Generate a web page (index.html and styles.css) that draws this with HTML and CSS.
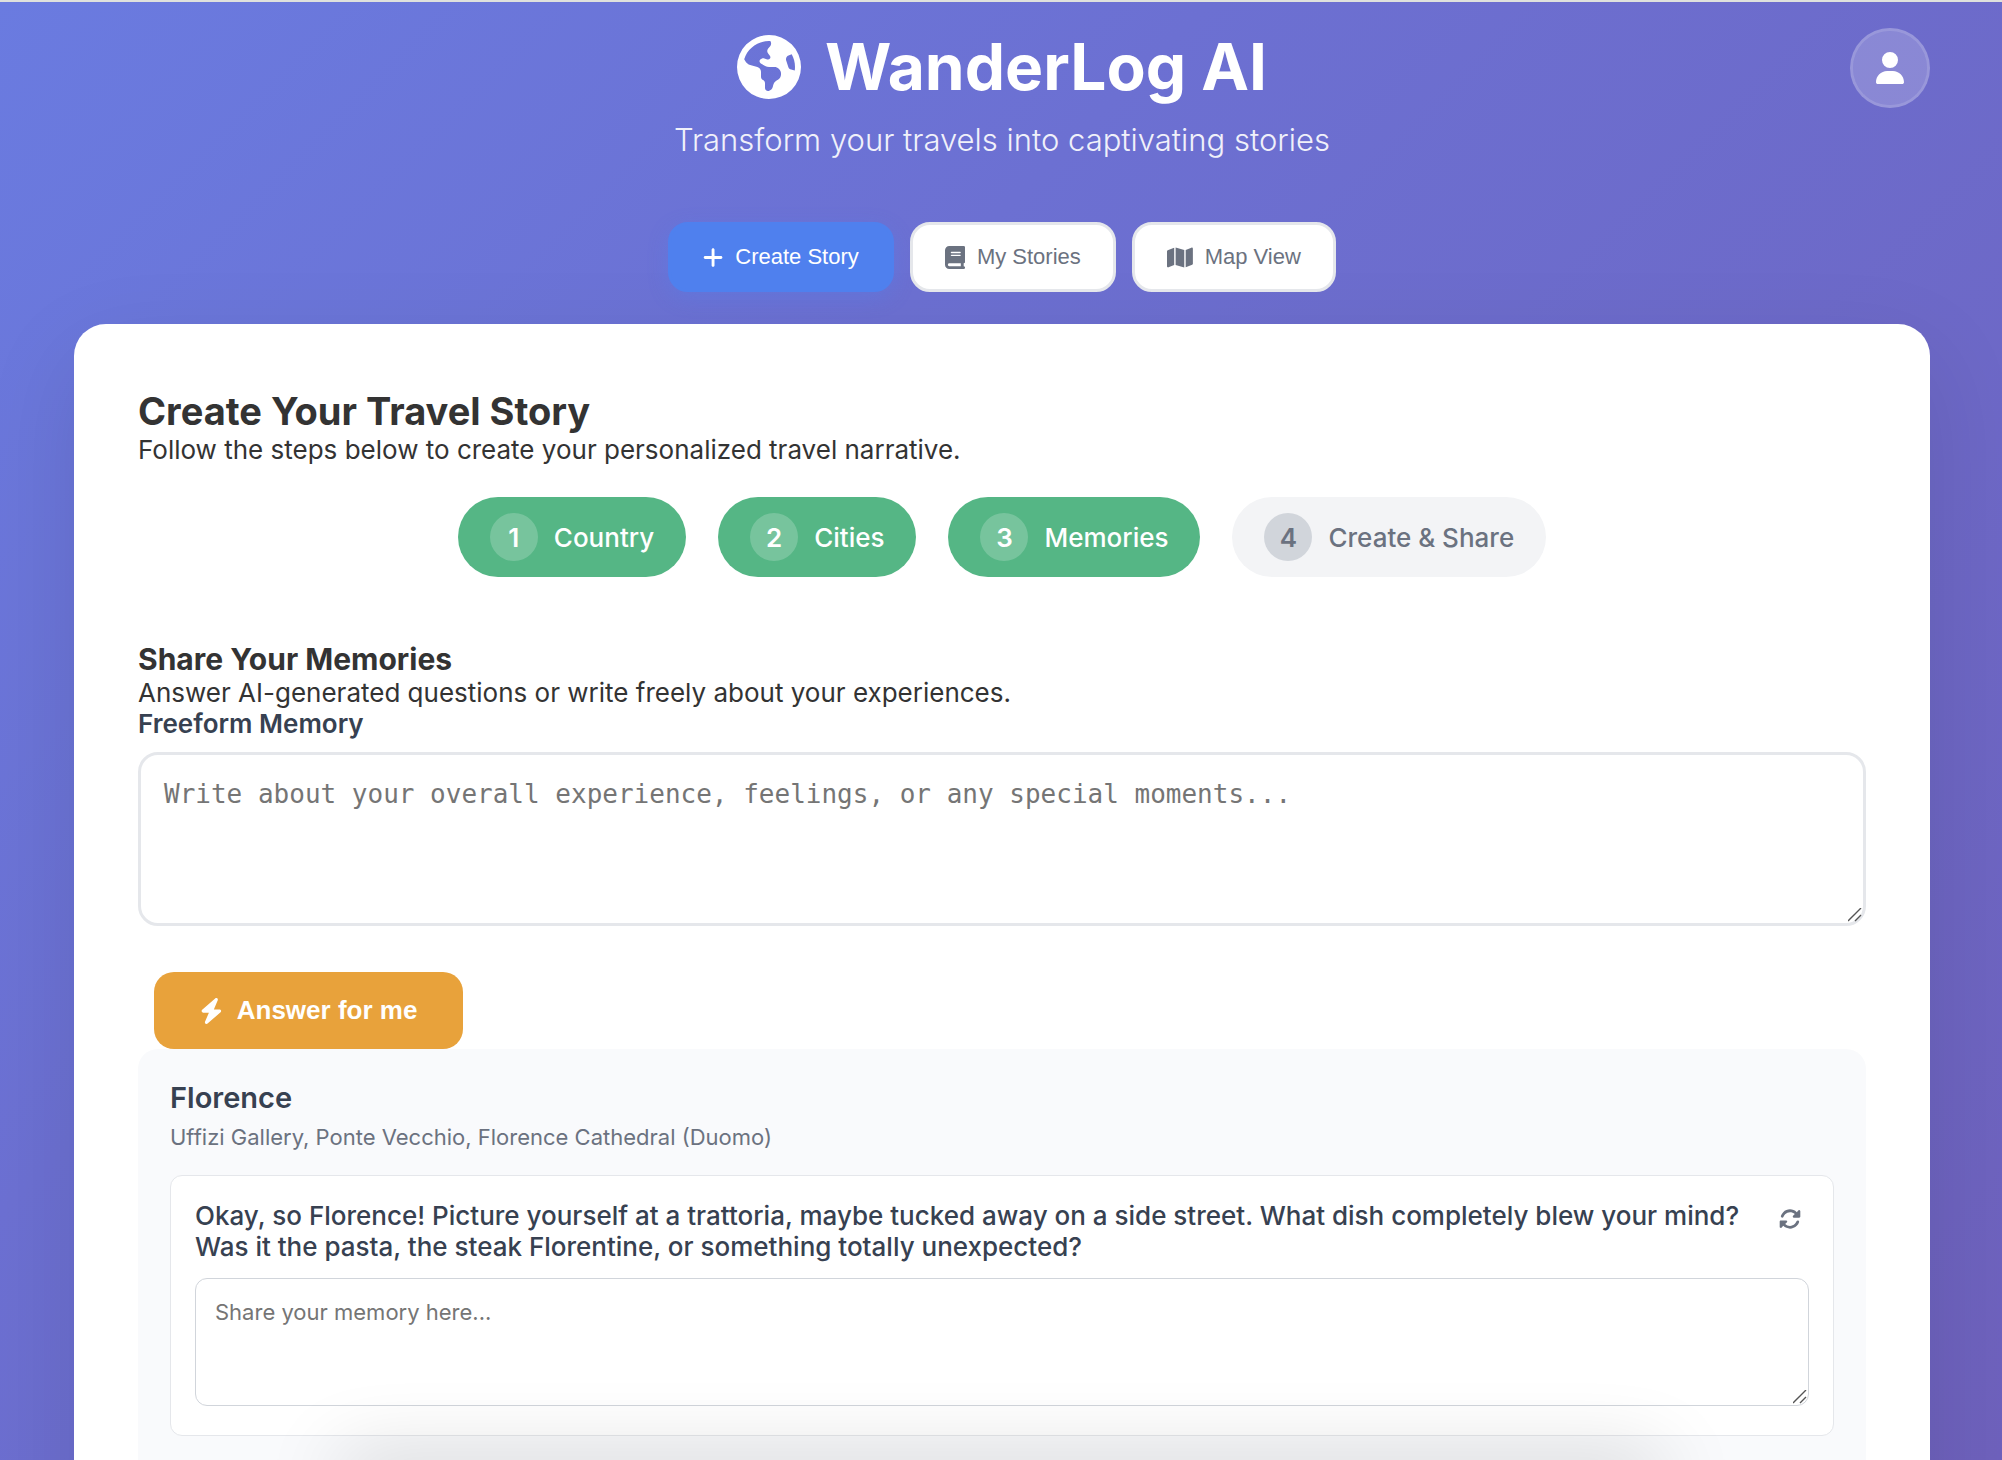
FILE: index.html
```html
<!DOCTYPE html>
<html lang="en">
<head>
<meta charset="utf-8">
<meta name="viewport" content="width=device-width, initial-scale=1">
<title>WanderLog AI</title>
<link rel="stylesheet" href="styles.css">
</head>
<body>
<div class="page">
  <header class="header">
    <h1 class="brand">
      <svg class="brand-icon" viewBox="0 0 512 512" aria-hidden="true"><path d="M57.7 193l9.4 16.4c8.3 14.5 21.9 25.2 38 29.8L163 255.7c17.2 4.9 29 20.6 29 38.5v39.9c0 11 6.2 21 16 25.9s16 14.9 16 25.9v39c0 15.6 14.9 26.9 29.9 22.6c16.1-4.6 28.6-17.5 32.7-33.8l2.8-11.2c4.2-16.9 15.2-31.4 30.3-40l8.1-4.6c15-8.5 24.2-24.5 24.2-41.7v-8.3c0-12.7-5.1-24.9-14.1-33.9l-3.9-3.9c-9-9-21.2-14.1-33.9-14.1H257c-11.1 0-22.1-2.9-31.8-8.4l-34.5-19.7c-4.3-2.5-7.6-6.5-9.2-11.2c-3.2-9.6 1.1-20 10.2-24.5l5.9-3c6.6-3.3 14.3-3.9 21.3-1.5l23.2 7.7c8.2 2.7 17.2-.4 21.9-7.5c4.7-7 4.2-16.3-1.2-22.8l-13.6-16.3c-10-12-9.9-29.5 .3-41.3l15.7-18.3c8.8-10.3 10.2-25 3.5-36.7l-2.4-4.2c-3.5-.2-6.9-.3-10.4-.3C163.1 48 84.4 108.9 57.7 193zM464 256c0-36.8-9.6-71.4-26.4-101.5L412 164.8c-15.7 6.3-23.8 23.8-18.5 39.8l16.9 50.7c3.5 10.4 12 18.3 22.6 20.9l29.1 7.3c1.2-9 1.8-18.2 1.8-27.5zM0 256a256 256 0 1 1 512 0A256 256 0 1 1 0 256z"/></svg>
      WanderLog AI
    </h1>
    <p class="tagline">Transform your travels into captivating stories</p>
    <button class="avatar" type="button" aria-label="Account">
      <svg class="avatar-icon" viewBox="0 0 448 512" aria-hidden="true"><path d="M224 256A128 128 0 1 0 224 0a128 128 0 1 0 0 256zm-45.7 48C79.8 304 0 383.8 0 482.3C0 498.7 13.3 512 29.7 512H418.3c16.4 0 29.7-13.3 29.7-29.7C448 383.8 368.2 304 269.7 304H178.3z"/></svg>
    </button>
  </header>

  <nav class="tabs" aria-label="Sections">
    <button class="tab tab-active" type="button">
      <svg class="tab-icon" viewBox="0 0 448 512" aria-hidden="true"><path d="M256 80c0-17.7-14.3-32-32-32s-32 14.3-32 32V224H48c-17.7 0-32 14.3-32 32s14.3 32 32 32H192V432c0 17.7 14.3 32 32 32s32-14.3 32-32V288H400c17.7 0 32-14.3 32-32s-14.3-32-32-32H256V80z"/></svg>
      Create Story
    </button>
    <button class="tab" type="button">
      <svg class="tab-icon" viewBox="0 0 448 512" aria-hidden="true"><path d="M96 0C43 0 0 43 0 96V416c0 53 43 96 96 96H384h32c17.7 0 32-14.3 32-32s-14.3-32-32-32V384c17.7 0 32-14.3 32-32V32c0-17.7-14.3-32-32-32H384 96zm0 384H352v64H96c-17.7 0-32-14.3-32-32s14.3-32 32-32zm32-240c0-8.8 7.2-16 16-16H336c8.8 0 16 7.2 16 16s-7.2 16-16 16H144c-8.8 0-16-7.2-16-16zm16 48H336c8.8 0 16 7.2 16 16s-7.2 16-16 16H144c-8.8 0-16-7.2-16-16s7.2-16 16-16z"/></svg>
      My Stories
    </button>
    <button class="tab" type="button">
      <svg class="tab-icon" viewBox="0 0 576 512" aria-hidden="true"><path d="M384 476.1L192 421.2V35.9L384 90.8V476.1zm32-1.2V88.4L543.1 37.5c15.8-6.3 32.9 5.3 32.9 22.3V394.6c0 9.8-6 18.6-15.1 22.3L416 474.9zM15.1 95.1L160 37.2V423.6L32.9 474.5C17.1 480.8 0 469.2 0 452.2V117.4c0-9.8 6-18.6 15.1-22.3z"/></svg>
      Map View
    </button>
  </nav>

  <main class="card">
    <h2 class="card-title">Create Your Travel Story</h2>
    <p class="text">Follow the steps below to create your personalized travel narrative.</p>

    <ol class="steps">
      <li class="step step-done"><span class="step-number">1</span>Country</li>
      <li class="step step-done"><span class="step-number">2</span>Cities</li>
      <li class="step step-done"><span class="step-number">3</span>Memories</li>
      <li class="step"><span class="step-number">4</span>Create &amp; Share</li>
    </ol>

    <section>
      <h3 class="section-title">Share Your Memories</h3>
      <p class="text">Answer AI-generated questions or write freely about your experiences.</p>
      <label class="field-label" for="freeform">Freeform Memory</label>
      <textarea class="freeform" id="freeform" placeholder="Write about your overall experience, feelings, or any special moments..."></textarea>
      <button class="answer" type="button">
        <svg class="answer-icon" viewBox="0 0 448 512" aria-hidden="true"><path d="M349.4 44.6c5.9-13.7 1.5-29.7-10.6-38.5s-28.6-8-39.9 1.8l-256 224c-10 8.8-13.6 22.9-8.9 35.3S50.7 288 64 288H175.5L98.6 467.4c-5.9 13.7-1.5 29.7 10.6 38.5s28.6 8 39.9-1.8l256-224c10-8.8 13.6-22.9 8.9-35.3s-16.6-20.7-30-20.7H272.5L349.4 44.6z"/></svg>
        Answer for me
      </button>

      <section class="city">
        <h4 class="city-name">Florence</h4>
        <p class="city-places">Uffizi Gallery, Ponte Vecchio, Florence Cathedral (Duomo)</p>
        <div class="question">
          <div class="question-head">
            <label class="question-text" for="memory-1">Okay, so Florence! Picture yourself at a trattoria, maybe tucked away on a side street. What dish completely blew your mind? Was it the pasta, the steak Florentine, or something totally unexpected?</label>
            <button class="refresh" type="button" aria-label="New question">
              <svg class="refresh-icon" viewBox="0 0 512 512" aria-hidden="true"><path d="M142.9 142.9c62.2-62.2 162.7-62.5 225.3-1L327 183c-6.9 6.9-8.9 17.2-5.2 26.2s12.5 14.8 22.2 14.8H463.5H472c13.3 0 24-10.7 24-24V72c0-9.7-5.8-18.5-14.8-22.2s-19.3-1.7-26.2 5.2L413.4 96.6c-87.6-86.5-228.7-86.2-315.8 1C73.2 122 55.6 150.7 44.8 181.4c-5.9 16.7 2.9 34.9 19.5 40.8s34.9-2.9 40.8-19.5c7.7-21.8 20.2-42.3 37.8-59.8zM16 312v7.6 .7V440c0 9.7 5.8 18.5 14.8 22.2s19.3 1.7 26.2-5.2l41.6-41.6c87.6 86.5 228.7 86.2 315.8-1c24.4-24.4 42.1-53.1 52.9-83.7c5.9-16.7-2.9-34.9-19.5-40.8s-34.9 2.9-40.8 19.5c-7.7 21.8-20.2 42.3-37.8 59.8c-62.2 62.2-162.7 62.5-225.3 1L185 329c6.9-6.9 8.9-17.2 5.2-26.2s-12.5-14.8-22.2-14.8H48.4h-.7H40c-13.3 0-24 10.7-24 24z"/></svg>
            </button>
          </div>
          <textarea class="memory" id="memory-1" placeholder="Share your memory here..."></textarea>
        </div>
      </section>
    </section>
  </main>
</div>
<div class="bottom-shadow"></div>
</body>
</html>
```
FILE: styles.css
```css
* {
  box-sizing: border-box;
  margin: 0;
  padding: 0;
}

html {
  height: 100%;
  overflow: hidden;
}

body {
  height: 100%;
  overflow: hidden;
  border-top: 2px solid #dfe1dd;
  background: linear-gradient(135deg, #6a7be0 0%, #6c70d2 35%, #6e61bc 100%);
  color: #333;
  font-family: Inter, "Liberation Sans", sans-serif;
  font-size: 26px;
  line-height: 31px;
}

svg {
  fill: currentColor;
}

.page {
  padding: 26px 72px 0 74px;
}

.header {
  position: relative;
  color: #fff;
  text-align: center;
}

.brand {
  display: flex;
  align-items: center;
  justify-content: center;
  gap: 24px;
  font-size: 64px;
  font-weight: 700;
  line-height: 78px;
}

.brand-icon {
  width: 64px;
  height: 64px;
}

.tagline {
  margin-top: 14px;
  font-size: 31px;
  font-weight: 300;
  line-height: 39px;
  opacity: 0.9;
}

.avatar {
  position: absolute;
  top: 0;
  right: 0;
  display: flex;
  align-items: center;
  justify-content: center;
  width: 80px;
  height: 80px;
  border: 3px solid rgba(255, 255, 255, 0.3);
  border-radius: 50%;
  background: rgba(255, 255, 255, 0.2);
  background-clip: padding-box;
  color: #fff;
}

.avatar-icon {
  width: 28px;
  height: 32px;
}

.tabs {
  display: flex;
  justify-content: center;
  gap: 16px;
  margin-top: 63px;
}

.tab {
  display: flex;
  align-items: center;
  gap: 12px;
  height: 70px;
  padding: 0 32px;
  border: 3px solid #e5e7eb;
  border-radius: 20px;
  background: #fff;
  color: #6b7280;
  font-family: "Liberation Sans", Arial, sans-serif;
  font-size: 22px;
  font-weight: 500;
}

.tab-active {
  border-color: #4f80ee;
  background: #4f80ee;
  box-shadow: 0 6px 20px rgba(79, 128, 238, 0.3);
  color: #fff;
}

.tab-icon {
  height: 23px;
}

.card {
  margin-top: 32px;
  padding: 64px 64px 160px;
  border-radius: 32px;
  background: #fff;
  box-shadow: 0 32px 96px rgba(0, 0, 0, 0.1);
}

.card-title {
  font-size: 38px;
  font-weight: 700;
  line-height: 46px;
}

.steps {
  display: flex;
  justify-content: center;
  gap: 32px;
  margin: 32px 0 64px;
  list-style: none;
}

.step {
  display: flex;
  align-items: center;
  gap: 16px;
  padding: 16px 32px;
  border-radius: 40px;
  background: #f3f4f6;
  color: #6b7280;
  font-weight: 500;
}

.step-number {
  display: flex;
  align-items: center;
  justify-content: center;
  width: 48px;
  height: 48px;
  border-radius: 50%;
  background: #d1d5db;
  font-weight: 600;
}

.step-done {
  background: #55b685;
  color: #fff;
}

.step-done .step-number {
  background: rgba(255, 255, 255, 0.2);
}

.section-title {
  font-size: 30px;
  font-weight: 700;
  line-height: 36px;
}

.field-label {
  display: block;
  margin-bottom: 13px;
  color: #374151;
  font-weight: 600;
}

textarea {
  display: block;
  width: 100%;
  resize: vertical;
  background: #fff;
}

textarea::placeholder {
  color: #757575;
}

textarea::-webkit-resizer {
  background: url("data:image/svg+xml,%3Csvg xmlns='http://www.w3.org/2000/svg' width='15' height='15'%3E%3Cpath d='M0 13L13 0M7 13L13 7' stroke='%23555' stroke-width='1.4'/%3E%3C/svg%3E") no-repeat;
}

.freeform {
  height: 174px;
  padding: 24px 23px;
  border: 3px solid #e5e7eb;
  border-radius: 20px;
  font-family: "DejaVu Sans Mono", monospace;
  font-size: 26px;
  line-height: 30px;
}

.answer {
  display: flex;
  align-items: center;
  gap: 14px;
  height: 77px;
  margin: 46px 0 0 16px;
  padding: 0 46px;
  border: 0;
  border-radius: 20px;
  background: #e8a23b;
  color: #fff;
  font-family: "Liberation Sans", Arial, sans-serif;
  font-size: 26px;
  font-weight: 600;
}

.answer-icon {
  height: 26px;
}

.city {
  padding: 32px;
  border-radius: 20px;
  background: #f9fafc;
}

.city-name {
  color: #374151;
  font-size: 29px;
  font-weight: 600;
  line-height: 34px;
}

.city-places {
  margin: 8px 0 24px;
  color: #6b7280;
  font-size: 22px;
  line-height: 28px;
}

.question {
  margin-bottom: 24px;
  padding: 24px 24px 29px;
  border: 1px solid #e5e7eb;
  border-radius: 12px;
  background: #fff;
}

.question-head {
  display: flex;
  align-items: flex-start;
  justify-content: space-between;
  gap: 16px;
}

.question-text {
  color: #374151;
  font-weight: 500;
}

.refresh {
  padding: 8px;
  border: 0;
  background: none;
  color: #6b7280;
}

.refresh-icon {
  display: block;
  width: 22px;
  height: 22px;
}

.memory {
  height: 128px;
  margin-top: 16px;
  padding: 19px;
  border: 1px solid #d1d5db;
  border-radius: 12px;
  font-family: Inter, "Liberation Sans", sans-serif;
  font-size: 22px;
  line-height: 28px;
}

/* Shade cast upward by the bar docked under the window's lower edge */
.bottom-shadow {
  position: fixed;
  right: 17%;
  bottom: -40px;
  left: 17%;
  height: 40px;
  box-shadow: 0 0 80px rgba(0, 0, 0, 0.2);
}
```
